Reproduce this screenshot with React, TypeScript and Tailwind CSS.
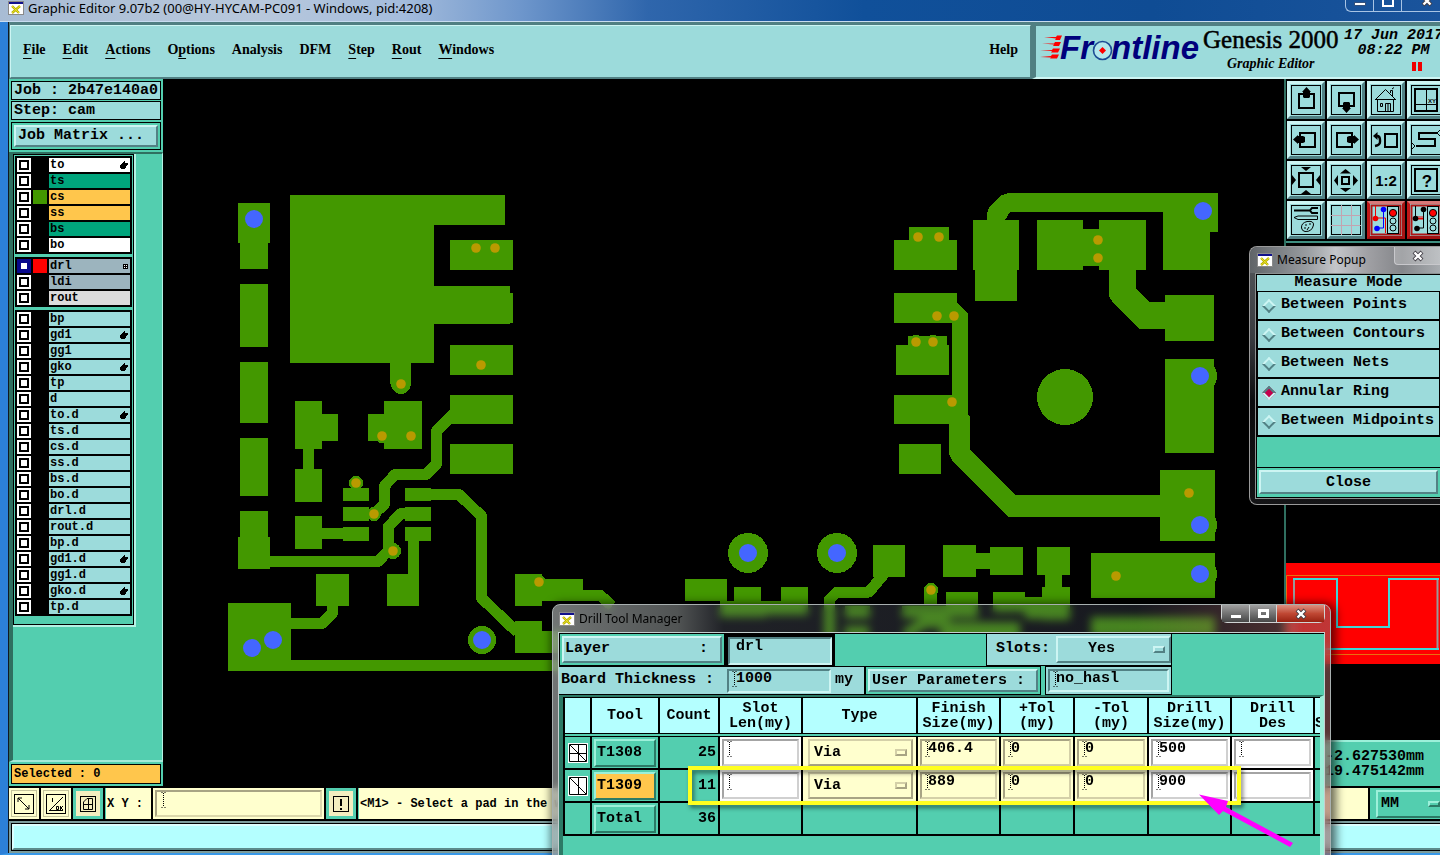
import type { ReactNode } from 'react';
import clsx from 'clsx';

type LayerTone = 'white' | 'green' | 'amber' | 'steel' | 'silver' | 'aqua';

interface Layer {
  name: string;
  tone: LayerTone;
  swatch?: string;
  mark?: 'hand' | 'grid';
  active?: boolean;
}

const toneClass: Record<LayerTone, string> = {
  white: 'bg-white',
  green: 'bg-[#00a47c]',
  amber: 'bg-[#ffc64c]',
  steel: 'bg-[#9cb4be]',
  silver: 'bg-[#dcdcdc]',
  aqua: 'bg-[#9cdbdb]',
};

const aqua = (name: string, mark?: 'hand'): Layer => ({ name, tone: 'aqua', mark });

const layerGroups: Layer[][] = [
  [
    { name: 'to', tone: 'white', mark: 'hand' },
    { name: 'ts', tone: 'green' },
    { name: 'cs', tone: 'amber', swatch: 'bg-[#439800]' },
    { name: 'ss', tone: 'amber' },
    { name: 'bs', tone: 'green' },
    { name: 'bo', tone: 'white' },
  ],
  [
    { name: 'drl', tone: 'steel', swatch: 'bg-[#ff0000]', mark: 'grid', active: true },
    { name: 'ldi', tone: 'steel' },
    { name: 'rout', tone: 'silver' },
  ],
  [
    aqua('bp'),
    aqua('gd1', 'hand'),
    aqua('gg1'),
    aqua('gko', 'hand'),
    aqua('tp'),
    aqua('d'),
    aqua('to.d', 'hand'),
    aqua('ts.d'),
    aqua('cs.d'),
    aqua('ss.d'),
    aqua('bs.d'),
    aqua('bo.d'),
    aqua('drl.d'),
    aqua('rout.d'),
    aqua('bp.d'),
    aqua('gd1.d', 'hand'),
    aqua('gg1.d'),
    aqua('gko.d', 'hand'),
    aqua('tp.d'),
  ],
];

// [label, index of the mnemonic letter]
const menuItems: [string, number][] = [
  ['File', 0],
  ['Edit', 0],
  ['Actions', 0],
  ['Options', 1],
  ['Analysis', -1],
  ['DFM', -1],
  ['Step', 0],
  ['Rout', 0],
  ['Windows', 0],
];

const measureModes = ['Between Points', 'Between Contours', 'Between Nets', 'Annular Ring', 'Between Midpoints'];

const mono = "font-['Liberation_Mono',monospace] font-bold";
const raised = 'border-t-[#cdf5f3] border-l-[#cdf5f3] border-b-[#528184] border-r-[#528184]';
const sunken = 'border-t-[#528184] border-l-[#528184] border-b-[#cdf5f3] border-r-[#cdf5f3]';
const raisedTeal = 'border-t-[#9cf0da] border-l-[#9cf0da] border-b-[#2c7a66] border-r-[#2c7a66]';

function WindowIcon() {
  return (
    <svg className="size-4 shrink-0" viewBox="0 0 16 16" aria-hidden="true">
      <rect x="0.5" y="1.5" width="15" height="13" fill="#fff" stroke="#8a8a8a" />
      <rect x="1" y="2" width="14" height="2" fill="#10108c" />
      <path d="M4 6l7 7M12 6l-8 7" stroke="#b8b000" strokeWidth="2.4" />
      <path d="M4 6l7 7M12 6l-8 7" stroke="#f4ec30" strokeWidth="0.8" />
    </svg>
  );
}

function CloseGlyph() {
  return (
    <svg className="size-3" viewBox="0 0 12 12" aria-hidden="true">
      <path d="M2 2L10 10M10 2L2 10" stroke="#403c44" strokeWidth="4" />
      <path d="M2.5 2.5L9.5 9.5M9.5 2.5L2.5 9.5" stroke="#fff" strokeWidth="2.4" />
    </svg>
  );
}

function HandMark() {
  return (
    <svg className="h-2 w-2 shrink-0" viewBox="0 0 8 8" aria-hidden="true">
      <path d="M4 0h1v2h3v2h-1v1h-1v2h-1v1h-4v-1h-1v-3h1v-1h1v-1h1v-1h1z" />
    </svg>
  );
}

function GridMark() {
  return (
    <svg className="h-[5px] w-[5px] shrink-0" viewBox="0 0 5 5" aria-hidden="true">
      <rect width="5" height="5" />
      <path d="M1 1h1v1h-1zM3 1h1v1h-1zM1 3h1v1h-1zM3 3h1v1h-1z" fill="#fff" />
    </svg>
  );
}

function Beam() {
  return (
    <svg className="h-4 w-[5px] shrink-0" viewBox="0 0 5 16" aria-hidden="true">
      <path d="M0.5 0.5h1M3.5 0.5h1M2.5 1v14M0.5 15.5h1M3.5 15.5h1" stroke="#000" strokeDasharray="1 1" />
    </svg>
  );
}

function LayerRow({ layer }: { layer: Layer }) {
  return (
    <label className="flex gap-[2px]">
      <input
        type="checkbox"
        defaultChecked={layer.active}
        className={clsx(
          'size-[14px] shrink-0 appearance-none border-2 bg-white',
          layer.active
            ? 'border-[#08088c] shadow-[inset_0_0_0_2px_#08088c]'
            : 'border-white shadow-[inset_0_0_0_2px_#000]',
        )}
      />
      <span className={clsx('size-[14px] shrink-0', layer.swatch)} />
      <span
        className={clsx(
          'flex h-[14px] flex-1 items-center justify-between pr-[2px] pl-px text-xs leading-[14px]',
          toneClass[layer.tone],
        )}
      >
        {layer.name}
        {layer.mark === 'hand' && <HandMark />}
        {layer.mark === 'grid' && <GridMark />}
      </span>
    </label>
  );
}

function Sidebar() {
  return (
    <aside className={clsx('flex w-[154px] shrink-0 flex-col bg-[#53ceaf]', mono)}>
      <div className="flex flex-col gap-px p-[2px]">
        <div className="border border-black bg-[#9cdbdb] pl-[2px] text-[15px] leading-[17px] whitespace-nowrap">
          Job : 2b47e140a0
        </div>
        <div className="border border-black bg-[#9cdbdb] pl-[2px] text-[15px] leading-[17px]">Step: cam</div>
        <div className="mt-px border border-black p-[2px]">
          <button
            className={clsx('block w-full border-2 bg-[#9cdbdb] pl-[2px] text-left text-[15px] leading-[18px]', raised)}
          >
            Job Matrix ...
          </button>
        </div>
      </div>
      <div className="flex flex-1 items-start border-t-2 border-r border-b-2 border-l-4 border-t-[#2f6f60] border-r-[#b4f2e4] border-b-[#a4ead8] border-l-[#2f6f60]">
        <div className="border-r-2 border-b-2 border-[#b4f2e4]">
          <div className="flex flex-col gap-[3px] border border-black bg-[#53ceaf] px-px pt-px pb-2">
            {layerGroups.map((group) => (
              <div key={group[0].name} className="flex w-[117px] flex-col gap-[2px] bg-black p-[2px]">
                {group.map((layer) => (
                  <LayerRow key={layer.name} layer={layer} />
                ))}
              </div>
            ))}
          </div>
        </div>
      </div>
      <div className="p-[2px]">
        <div className="border border-black bg-[#ffc64c] pl-[2px] text-xs leading-[18px]">Selected : 0</div>
      </div>
    </aside>
  );
}

// x, y, width, height
const pads: number[][] = [
  [238, 203, 32, 40], [240, 243, 28, 26], [240, 284, 28, 63], [240, 362, 28, 61], [240, 438, 28, 58],
  [240, 511, 28, 26], [238, 537, 32, 32], [290, 195, 215, 30], [290, 225, 144, 138], [434, 286, 76, 38],
  [510, 293, 3, 30], [390, 363, 21, 21], [450, 240, 63, 30], [450, 345, 63, 30], [450, 395, 63, 29],
  [450, 444, 63, 30], [295, 401, 27, 48], [322, 414, 16, 27], [303, 449, 11, 20], [295, 469, 27, 33],
  [295, 516, 27, 33], [322, 528, 21, 11], [343, 527, 26, 14], [343, 507, 26, 14], [343, 488, 26, 13],
  [384, 401, 38, 48], [368, 414, 16, 27], [405, 488, 26, 13], [405, 507, 26, 14], [405, 527, 26, 14],
  [408, 541, 11, 33], [387, 574, 32, 32], [316, 574, 33, 32], [228, 603, 63, 67], [228, 660, 340, 11],
  [515, 574, 27, 32], [542, 579, 41, 22], [515, 621, 27, 32], [542, 631, 22, 22],
  [909, 227, 40, 13], [894, 240, 63, 30], [973, 220, 46, 50], [975, 270, 42, 31], [1037, 220, 46, 50],
  [1083, 229, 16, 37], [1099, 220, 47, 50], [1165, 295, 49, 46], [1165, 359, 49, 94], [894, 293, 63, 30],
  [908, 336, 39, 9], [896, 345, 53, 30], [894, 395, 63, 29], [899, 444, 42, 30], [1160, 470, 55, 71],
  [1091, 553, 124, 45], [873, 545, 32, 32], [685, 579, 42, 22], [734, 587, 27, 17], [781, 587, 27, 17],
  [943, 545, 33, 32], [976, 553, 14, 16], [990, 547, 33, 28], [1037, 547, 33, 28], [1045, 575, 17, 12],
  [1042, 587, 28, 33], [1025, 597, 17, 22], [993, 592, 32, 20], [946, 592, 32, 20], [924, 590, 13, 14],
  [720, 601, 46, 16], [734, 601, 74, 14], [845, 606, 25, 12], [902, 606, 76, 12], [1091, 617, 124, 20],
  [940, 622, 80, 20], [845, 626, 24, 12],
];

// cx, cy, r
const rings: number[][] = [
  [254, 219, 16], [401, 384, 10], [382, 436, 7], [356, 483, 7], [374, 514, 7], [393, 551, 8], [539, 582, 7],
  [482, 640, 14], [1203, 211, 15], [1201, 376, 16], [1201, 525, 16], [1201, 574, 16], [1065, 397, 28],
  [916, 342, 7], [933, 342, 7], [937, 316, 7], [748, 553, 20], [837, 553, 20], [931, 590, 7],
];

const vias: number[][] = [
  [476, 248], [495, 248], [481, 365], [401, 384], [382, 436], [411, 436], [356, 483], [374, 514], [393, 551],
  [539, 582], [918, 237], [939, 237], [1098, 240], [1098, 258], [937, 316], [954, 316], [916, 342], [933, 342],
  [952, 402], [1189, 493], [1116, 576], [931, 590],
];

const drills: number[][] = [
  [254, 219], [252, 648], [273, 640], [482, 640], [1203, 211], [1200, 376], [1200, 525], [1200, 574], [748, 553],
  [837, 553],
];

function BoardCanvas() {
  return (
    <main className="relative min-w-0 flex-1 overflow-hidden bg-black">
      <svg className="block h-full w-full" role="img" aria-label="Board layout">
        <g transform="translate(-163 -79)">
          <g fill="#439800" shapeRendering="crispEdges">
            {pads.map(([x, y, w, h]) => (
              <rect key={`${x}-${y}`} x={x} y={y} width={w} height={h} />
            ))}
            {rings.map(([x, y, r]) => (
              <circle key={`${x}-${y}`} cx={x} cy={y} r={r} />
            ))}
            <path d="M987 220V213L990 206L1000 196L1008 193H1218V232H1210V270H1163V212H1010L1005 220Z" />
            <path d="M1109 270H1136V289L1150 302H1165V329H1140L1113 303L1109 296Z" />
            <path d="M957 302L968 314V414L970 417V450L1016 495H1160V517H1009L953 462L949 454V415H952V320H945Z" />
          </g>
          <g fill="none" stroke="#439800" strokeWidth="11" strokeLinejoin="round" shapeRendering="crispEdges">
            <path d="M268 561.5H378L388 551V527L401 513.5H410" />
            <path d="M374 514L384.5 504V486L395 474.5H426L436.5 464V431L456 411" />
            <path d="M430 494.5H459L481.5 516V598L517 632" />
            <path d="M332.5 604V613L322 623.5H290" />
            <path d="M580 595H600L612 606" />
            <path d="M884 574L869 592H837L829 600V640" />
            <path d="M905 635L925 622H950" />
          </g>
          <g fill="#b99a00">
            {vias.map(([x, y]) => (
              <circle key={`${x}-${y}`} cx={x} cy={y} r="4.8" />
            ))}
          </g>
          <g fill="#4466ff">
            {drills.map(([x, y]) => (
              <circle key={`${x}-${y}`} cx={x} cy={y} r="9" />
            ))}
          </g>
        </g>
      </svg>
    </main>
  );
}

function TrafficLight({ wires }: { wires: ReactNode }) {
  return (
    <>
      {wires}
      <rect x="20.5" y="5.5" width="11" height="27" fill="#9cdbdb" stroke="#000" />
      <circle cx="26" cy="12" r="3.6" fill="#f00" stroke="#000" />
      <circle cx="26" cy="20" r="3" fill="none" stroke="#000" />
      <circle cx="26" cy="27" r="3" fill="none" stroke="#000" />
    </>
  );
}

interface ToolDef {
  label: string;
  art: ReactNode;
  red?: boolean;
}

const toolDefs: ToolDef[] = [
  {
    label: 'Pan up',
    art: (
      <>
        <rect x="12" y="13" width="15" height="14" fill="none" stroke="#000" strokeWidth="2" />
        <path d="M19.5 6L24 11H23V16L22 17H17L16 16V11H15Z" />
      </>
    ),
  },
  {
    label: 'Pan down',
    art: (
      <>
        <rect x="12" y="12" width="15" height="13" fill="none" stroke="#000" strokeWidth="2" />
        <path d="M19.5 32L24 27H23V22L22 21H17L16 22V27H15Z" />
      </>
    ),
  },
  {
    label: 'Home',
    art: (
      <path
        d="M8.5 18.5L18.5 8.5L28.5 18.5M8 18.5H29M10.5 18.5V30.5H26.5V18.5M13.5 22.5H15.5V25.5H13.5ZM18.5 30V22.5H23.5V30M21 22.5V30M23.5 12V9.5H25.5V15M25 8L27 6.5"
        fill="none"
        stroke="#000"
      />
    ),
  },
  {
    label: 'Zoom to coordinates',
    art: (
      <>
        <rect x="8" y="8" width="22" height="22" fill="none" stroke="#000" strokeWidth="2" />
        <path d="M19.5 8V30M8 23.5H30" stroke="#000" fill="none" />
        <text x="21" y="22" fontSize="6" fontFamily="Liberation Sans" fontWeight="bold">XY</text>
      </>
    ),
  },
  {
    label: 'Pan left',
    art: (
      <>
        <rect x="13" y="12" width="15" height="14" fill="none" stroke="#000" strokeWidth="2" />
        <path d="M6 18.5L11 14V15H16L18 16V21L16 22H11V23Z" />
      </>
    ),
  },
  {
    label: 'Pan right',
    art: (
      <>
        <rect x="10" y="12" width="15" height="14" fill="none" stroke="#000" strokeWidth="2" />
        <path d="M32 18.5L27 14V15H22L20 16V21L22 22H27V23Z" />
      </>
    ),
  },
  {
    label: 'Previous view',
    art: (
      <>
        <rect x="18" y="13" width="12" height="13" fill="none" stroke="#000" strokeWidth="2" />
        <path d="M8 15H10Q13 15 13 19V21Q13 24 8 25" fill="none" stroke="#000" strokeWidth="2.4" />
        <path d="M6 15L10.5 11V19Z" />
      </>
    ),
  },
  {
    label: 'Serpentine view',
    art: (
      <>
        <path d="M30 12H12V18H28V25H9" fill="none" stroke="#000" strokeWidth="2" />
        <path d="M33 9L30 12L33 15M5 22L8 25L5 28" fill="none" stroke="#000" />
      </>
    ),
  },
  {
    label: 'Zoom in',
    art: (
      <>
        <rect x="12" y="12" width="14" height="14" fill="none" stroke="#000" strokeWidth="2" />
        <path d="M14 6H24L19 10ZM14 33H24L19 29ZM5 14V24L9 19ZM33 14V24L29 19Z" />
      </>
    ),
  },
  {
    label: 'Zoom out',
    art: (
      <>
        <rect x="15" y="16" width="7" height="7" fill="none" stroke="#000" strokeWidth="2" />
        <path d="M13 12.5H24L18.5 8ZM13 27H24L18.5 31ZM11 14V25L7 19.5ZM26 14V25L31 19.5Z" />
      </>
    ),
  },
  {
    label: 'Half scale',
    art: (
      <text x="19" y="25" fontSize="15" textAnchor="middle" fontFamily="Liberation Sans" fontWeight="bold">1:2</text>
    ),
  },
  {
    label: 'Help on view',
    art: (
      <>
        <rect x="8" y="8" width="22" height="22" fill="none" stroke="#000" strokeWidth="2" />
        <text x="20" y="26" fontSize="17" textAnchor="middle" fontFamily="Liberation Sans" fontWeight="bold">?</text>
      </>
    ),
  },
  {
    label: 'Tools',
    art: (
      <>
        <path d="M7 9.5H23M31 7H25L23 9.5L25 12H31" fill="none" stroke="#000" strokeWidth="2" />
        <path d="M7 16.5L11 15H30.5V18.5H11Z" fill="none" stroke="#000" />
        <path
          d="M14.5 27Q14 22 20 20.5Q27 19.5 26.5 24Q25 31 18 30.5Q15 30 14.5 27ZM18 24H20M22 23H24M17 27H19M22 26L20 29"
          fill="none"
          stroke="#000"
        />
      </>
    ),
  },
  {
    label: 'Grid',
    art: <path d="M14.5 4V34M24.5 4V34M4 14.5H34M4 24.5H34" stroke="#c4a4b0" fill="none" />,
  },
  {
    label: 'Online net check',
    red: true,
    art: (
      <TrafficLight
        wires={
          <>
            <path d="M8.5 5V17H18.5V32" fill="none" stroke="#e00" />
            <path d="M16.5 9V27H10" fill="none" stroke="#00f" />
            <circle cx="8.5" cy="17.5" r="2.8" fill="#e00" />
            <circle cx="16.5" cy="8.5" r="2.8" fill="#00f" />
            <circle cx="10" cy="27.5" r="2.8" fill="#00f" />
          </>
        }
      />
    ),
  },
  {
    label: 'Online spacing check',
    red: true,
    art: (
      <TrafficLight
        wires={
          <>
            <path d="M8.5 5V17M16.5 9V27H10" fill="none" stroke="#000" />
            <path d="M11 15V19M13 15V19M15 15V19M11 17.5H16" fill="none" stroke="#e00" />
            <circle cx="8.5" cy="17.5" r="2.8" />
            <circle cx="16.5" cy="8.5" r="2.8" />
            <circle cx="10" cy="27.5" r="2.8" />
          </>
        }
      />
    ),
  },
];

function Toolbox() {
  return (
    <div className="grid grid-cols-[repeat(4,38px)] gap-[2px] border-b-2 border-[#3f8f80] bg-black pt-[2px] pb-[2px] pl-px">
      {toolDefs.map((tool) => (
        <button
          key={tool.label}
          aria-label={tool.label}
          className={clsx(
            'size-[38px] border-[3px] bg-[#9cdbdb]',
            tool.red ? 'border-t-[#d87878] border-r-[#a81414] border-b-[#a01010] border-l-[#c01818]' : raised,
          )}
        >
          <svg className="block size-8" viewBox="3 3 32 32">
            <rect
              x="4.5"
              y="4.5"
              width="29"
              height="29"
              fill="none"
              stroke={tool.red ? '#b01414' : '#000'}
              strokeWidth={tool.red ? 2 : 1}
            />
            {tool.art}
          </svg>
        </button>
      ))}
    </div>
  );
}

function RightColumn() {
  return (
    <div className="flex w-[156px] shrink-0 flex-col overflow-hidden border-l-2 border-[#2f6f60] bg-black">
      <Toolbox />
      <div className="flex flex-1 flex-col justify-end">
        <svg className="mb-[76px] block h-[101px] w-full" viewBox="1286 563 154 101" role="img" aria-label="Overview">
          <rect x="1286" y="563" width="154" height="101" fill="#f00" />
          <path d="M1286.5 655V575.5H1440M1286 654.5H1440" fill="none" stroke="#e87010" />
          <path d="M1294 579V649M1437.5 579V649" stroke="#999" strokeWidth="2" />
          <path d="M1293 579H1337V627H1389V579H1439M1293 649H1439" fill="none" stroke="#3fd8d8" strokeWidth="2" />
        </svg>
      </div>
      <div
        className={clsx(
          'flex flex-col items-end border-t-2 border-[#9cf0da] bg-[#53ceaf] pt-[7px] pr-4 pb-[7px] text-[15px] leading-[15px]',
          mono,
        )}
      >
        <span>-2.627530mm</span>
        <span>19.475142mm</span>
      </div>
    </div>
  );
}

function FrontlineLogo() {
  return (
    <svg className="h-10 w-[162px] shrink-0" viewBox="1040 32 162 40" role="img" aria-label="Frontline">
      <g fill="#f00">
        <path d="M1045 39L1057 39L1058 37.5H1063L1061 42H1056L1057 40.5Z" />
        <path d="M1043 45.5L1055 45.5L1056 44H1062L1060 48H1054L1055 46.5Z" />
        <path d="M1041 52L1053 52L1054 50.5H1061L1059 54.5H1052L1053 53Z" />
        <path d="M1041 59L1052 58L1053 56.5H1060L1058 60.5H1051L1052 59.5Z" />
      </g>
      <g fill="#00007c" fontFamily="Liberation Sans, sans-serif" fontWeight="bold" fontStyle="italic" fontSize="33">
        <text x="1061" y="61">Fr</text>
        <text x="1112" y="61">ntline</text>
      </g>
      <circle cx="1103.5" cy="52.5" r="9" fill="#b4e8ec" stroke="#1c4c94" strokeWidth="1.6" />
      <path d="M1103.5 49L1107 52.5L1103.5 56L1100 52.5Z" fill="#f00" />
    </svg>
  );
}

function MenuLabel({ text, index }: { text: string; index: number }) {
  if (index < 0) return <>{text}</>;
  return (
    <>
      {text.slice(0, index)}
      <span className="underline decoration-1 underline-offset-4">{text[index]}</span>
      {text.slice(index + 1)}
    </>
  );
}

function Header() {
  return (
    <header className="flex h-[57px] shrink-0 border-t-2 border-[#507f82] bg-[#9cdbdb]">
      <nav
        className={clsx(
          "flex flex-1 items-center gap-[17px] border-2 px-3 pb-1 font-['Liberation_Serif',serif] text-sm leading-5 font-bold outline-1 -outline-offset-1 outline-[#507f82]",
          raised,
        )}
      >
        {menuItems.map(([text, index]) => (
          <button key={text}>
            <MenuLabel text={text} index={index} />
          </button>
        ))}
        <button className="ml-auto">Help</button>
      </nav>
      <div className="flex w-[408px] shrink-0 items-center overflow-hidden border-y-2 border-l-4 border-t-[#507f82] border-b-[#cdf5f3] border-l-[#507f82] pb-1 pl-[3px]">
        <FrontlineLogo />
        <div className="flex shrink-0 flex-col items-center px-[2px] font-['Liberation_Serif',serif]">
          <span className="text-[25px] leading-7 font-normal [-webkit-text-stroke:0.5px_black]">Genesis 2000</span>
          <span className="text-sm leading-5 font-bold italic">Graphic Editor</span>
        </div>
        <div className={clsx('flex w-[102px] shrink-0 flex-col items-center pl-1 text-[15px] leading-[15px] italic', mono)}>
          <span className="whitespace-nowrap">17 Jun 2017</span>
          <span>08:22 PM</span>
          <span className="mt-1 mr-[-48px] flex gap-[2px]">
            <i className="h-[9px] w-1 bg-[#f00000]" />
            <i className="h-[9px] w-1 bg-[#f00000]" />
          </span>
        </div>
      </div>
    </header>
  );
}

function TitleBar() {
  return (
    <div className="flex h-[22px] shrink-0 items-start overflow-hidden border-b border-[#c8dcf0] bg-[linear-gradient(90deg,#a8bcd4_0%,#b8c8dc_18%,#a4bcdc_28%,#6f97cc_36%,#2f66ac_45%,#10509a_60%,#0f4c94_80%,#1a549c_100%)]">
      <div className="flex items-center gap-1 pl-2 font-['Noto_Sans','Open_Sans',sans-serif] text-[13px] leading-[14px] text-black">
        <WindowIcon />
        <span className="whitespace-nowrap">Graphic Editor 9.07b2 (00@HY-HYCAM-PC091 - Windows, pid:4208)</span>
      </div>
      <div className="ml-auto flex h-3 w-[95px] shrink-0 rounded-bl-md border-b border-l border-[#a8c4e4]">
        <button aria-label="Minimize" className="flex w-7 items-start justify-center border-r border-[#a8c4e4]">
          <span className="mt-[2px] h-1 w-3 border border-[#33507c] bg-white" />
        </button>
        <button aria-label="Maximize" className="flex w-7 items-start justify-center border-r border-[#a8c4e4]">
          <span className="h-[7px] w-3 border-2 border-t-0 border-white" />
        </button>
        <button aria-label="Close" className="flex flex-1 items-end justify-center overflow-hidden pb-1 pl-3">
          <CloseGlyph />
        </button>
      </div>
    </div>
  );
}

function SquareTool({ label, teal, children }: { label: string; teal?: boolean; children: ReactNode }) {
  return (
    <button
      aria-label={label}
      className={clsx(
        'flex w-[30px] shrink-0 items-center justify-center border-3',
        teal ? 'border-[#53ceaf] bg-[#f4eec0]' : 'border-[#ffffce] bg-[#ffffce] outline-1 -outline-offset-3 outline-[#c4c49c]',
      )}
    >
      <svg className="size-5 shrink-0" viewBox="0 0 20 20" fill="none" stroke="#000">
        {children}
      </svg>
    </button>
  );
}

function StatusRow() {
  return (
    <div className={clsx('flex h-[35px] shrink-0 gap-[2px] border-y-2 border-black bg-black text-xs', mono)}>
      <SquareTool label="Snap line">
        <rect x="0.5" y="0.5" width="19" height="19" />
        <path d="M4 4L15 15M4 8V4H8M15 11V15H11" />
      </SquareTool>
      <SquareTool label="Line mode">
        <rect x="0.5" y="0.5" width="19" height="19" />
        <path d="M3 17L17 3M3 16.5H17M6.5 4V8M10.5 12.5h2v3h-2zM14.5 12v4M17 12l-2 2l2 2" />
      </SquareTool>
      <SquareTool label="Grid mode" teal>
        <rect x="2.5" y="2.5" width="15" height="15" />
        <path d="M5.5 8L9 4.5H14.5V15.5H5.5ZM10.5 4V16M5 10.5H15" />
      </SquareTool>
      <label className="flex shrink-0 items-stretch gap-[2px]">
        <span className="flex w-[46px] items-center border-l border-[#53ceaf] bg-[#ffffce] pl-px">X Y :</span>
        <span className="flex w-[171px] bg-[#ffffce] p-[2px]">
          <span className="flex flex-1 items-start border-2 border-[#a8a484] border-r-[#dcd8ac] border-b-[#dcd8ac] pl-1">
            <Beam />
            <input className="h-full w-full bg-transparent outline-none" />
          </span>
        </span>
      </label>
      <SquareTool label="Messages" teal>
        <rect x="2.5" y="2.5" width="15" height="15" />
        <path d="M10 5V12M10 14V16" strokeWidth="2" />
      </SquareTool>
      <div className="flex flex-1 items-center overflow-hidden border-l border-[#53ceaf] bg-[#ffffce] pl-px whitespace-nowrap">
        &lt;M1&gt; - Select a pad in the w
      </div>
      <div className="flex w-[70px] shrink-0 items-center justify-end bg-[#53ceaf] pl-[6px]">
        <div className={clsx('relative h-7 w-full border-y-2 border-l-2 bg-[#53ceaf]', raisedTeal)}>
          <select aria-label="Units" className="h-full w-full appearance-none bg-transparent pl-[3px] text-[15px] outline-none">
            <option>MM</option>
            <option>INCH</option>
          </select>
          <span
            className={clsx('pointer-events-none absolute top-[9px] right-0 h-[6px] w-3 border-2 bg-[#53ceaf]', raisedTeal)}
          />
        </div>
      </div>
    </div>
  );
}

function MeasurePopup() {
  return (
    <section className="absolute top-[246px] right-0 flex w-[191px] flex-col rounded-l-lg border border-r-0 border-[#9a9a9a] bg-[linear-gradient(180deg,#55585c_0%,#3a3c40_35%,#0c0c0e_60%,#141416_100%)] pb-[5px] pl-[5px]">
      <div className="-ml-[5px] flex h-[26px] items-center gap-1 overflow-hidden rounded-tl-lg bg-[linear-gradient(90deg,#606468_0%,#989ca0_30%,#c4c6ca_45%,#a0a0a4_62%,#84868a_80%,#a8acb0_100%)] pl-[7px] font-['Noto_Sans','Open_Sans',sans-serif] text-xs leading-4">
        <WindowIcon />
        <h2>Measure Popup</h2>
        <button
          aria-label="Close Measure Popup"
          className="ml-auto flex h-[18px] w-[46px] items-center justify-center self-start rounded-bl border-b border-l border-[#c8c8cc] bg-white/25"
        >
          <CloseGlyph />
        </button>
      </div>
      <fieldset className={clsx('border-y border-l border-[#8c9090] bg-black pl-px text-[15px]', mono)}>
        <div className="my-px bg-[#9cdbdb] text-center leading-4">Measure Mode</div>
        {measureModes.map((mode) => (
          <label
            key={mode}
            className="mx-px mb-[2px] flex h-[27px] items-center gap-[5px] bg-[#9cdbdb] pl-1 whitespace-nowrap"
          >
            <input
              type="radio"
              name="measure-mode"
              defaultChecked={mode === 'Annular Ring'}
              className="mx-[2px] size-[10px] shrink-0 rotate-45 appearance-none border-2 border-t-[#cdf5f3] border-r-[#528184] border-b-[#528184] border-l-[#cdf5f3] bg-[#9cdbdb] checked:border-t-[#528184] checked:border-r-[#cdf5f3] checked:border-b-[#cdf5f3] checked:border-l-[#528184] checked:bg-[#c4004c]"
            />
            {mode}
          </label>
        ))}
        <div className="h-[30px] bg-[#53ceaf]" />
        <div className="my-px border-2 border-[#53ceaf] bg-[#53ceaf]">
          <button className={clsx('h-6 w-full border-2 bg-[#9cdbdb]', raised)}>Close</button>
        </div>
      </fieldset>
    </section>
  );
}

const inputTone: Record<string, string> = {
  white: 'bg-white border-t-[#a4a4a4] border-l-[#a4a4a4] border-b-[#d0d0d0] border-r-[#d0d0d0]',
  cream: 'bg-[#ffffce] border-t-[#a8a484] border-l-[#a8a484] border-b-[#d4d0a8] border-r-[#d4d0a8]',
};

function CellInput({ label, value, tone, bare }: { label: string; value: string; tone: 'white' | 'cream'; bare?: boolean }) {
  return (
    <div className={clsx('p-[2px]', tone === 'white' ? 'bg-white' : 'bg-[#ffffce]')}>
      <div className={clsx('flex h-[27px] items-start border-2 pl-[3px]', inputTone[tone])}>
        {!bare && <Beam />}
        <input
          aria-label={label}
          defaultValue={value}
          className="-ml-[2px] h-4 w-full min-w-0 bg-transparent leading-4 outline-none"
        />
      </div>
    </div>
  );
}

function TypeCell({ label }: { label: string }) {
  return (
    <div className="bg-[#ffffce] py-[2px] pr-[3px] pl-[5px]">
      <div className="relative h-[27px] border-2 border-t-[#d4d0a8] border-r-[#a8a484] border-b-[#a8a484] border-l-[#d4d0a8]">
        <select aria-label={label} className="h-full w-full appearance-none bg-transparent pl-1 outline-none" defaultValue="Via">
          <option>Via</option>
          <option>Plated</option>
        </select>
        <span className="pointer-events-none absolute top-2 right-1 h-[7px] w-3 border-2 border-t-[#d4d0a8] border-r-[#a8a484] border-b-[#a8a484] border-l-[#d4d0a8]" />
      </div>
    </div>
  );
}

interface ToolRow {
  tool: string;
  count: number;
  finish: string;
  size: string;
  selected?: boolean;
}

const toolRows: ToolRow[] = [
  { tool: 'T1308', count: 25, finish: '406.4', size: '500' },
  { tool: 'T1309', count: 11, finish: '889', size: '900', selected: true },
];

const columns = [
  { width: 'w-[27px]', lines: [''] },
  { width: 'w-[68px]', lines: ['Tool'] },
  { width: 'w-[60px]', lines: ['Count'] },
  { width: 'w-[83px]', lines: ['Slot', 'Len(my)'] },
  { width: 'w-[115px]', lines: ['Type'] },
  { width: 'w-[83px]', lines: ['Finish', 'Size(my)'] },
  { width: 'w-[74px]', lines: ['+Tol', '(my)'] },
  { width: 'w-[74px]', lines: ['-Tol', '(my)'] },
  { width: 'w-[83px]', lines: ['Drill', 'Size(my)'] },
  { width: 'w-[83px]', lines: ['Drill', 'Des'] },
];

const cell = 'h-[33px] border-r-2 border-b-2 border-black p-0';

function ToolButton({ text, selected }: { text: string; selected?: boolean }) {
  return (
    <div className="px-[2px] py-px">
      <button
        className={clsx('block h-7 w-full border-2 pl-px text-left', selected ? 'bg-[#ffc64c]' : 'bg-[#53ceaf]', raisedTeal)}
      >
        {text}
      </button>
    </div>
  );
}

function ToolTable() {
  return (
    <table className="w-full table-fixed border-separate border-spacing-0 border-l-2 border-black text-[15px] leading-4">
      <thead>
        <tr>
          {columns.map((column) => (
            <th
              key={column.lines.join(' ')}
              className={clsx(
                'h-[37px] border-y border-r-2 border-black bg-[#b4ffff] p-0 leading-[15px] font-bold whitespace-nowrap',
                column.width,
              )}
            >
              {column.lines.map((line) => (
                <div key={line}>{line}</div>
              ))}
            </th>
          ))}
          <th className="overflow-hidden border-y border-black bg-[#b4ffff] p-0 text-left leading-[15px] font-bold">
            <div>&nbsp;</div>
            <div>S</div>
          </th>
        </tr>
        <tr aria-hidden="true">
          <td colSpan={11} className="h-[3px] border-b border-black p-0" />
        </tr>
      </thead>
      <tbody>
        {toolRows.map((row) => (
          <tr key={row.tool}>
            <td className={cell}>
              <svg className="mx-auto block size-5" viewBox="0 0 20 20">
                <rect width="20" height="20" fill="#fff" />
                <path d="M1.5 1.5H18.5V18.5H1.5ZM2 2L18 18M10.5 2V18" fill="none" stroke="#000" />
                {!row.selected && <path d="M2 10.5H18" stroke="#000" />}
              </svg>
            </td>
            <td className={cell}>
              <ToolButton text={row.tool} selected={row.selected} />
            </td>
            <td className={clsx(cell, 'pr-[2px] text-right')}>{row.count}</td>
            <td className={cell}>
              <CellInput label={`${row.tool} slot length`} value="" tone="white" />
            </td>
            <td className={cell}>
              <TypeCell label={`${row.tool} type`} />
            </td>
            <td className={cell}>
              <CellInput label={`${row.tool} finish size`} value={row.finish} tone="cream" />
            </td>
            <td className={cell}>
              <CellInput label={`${row.tool} plus tolerance`} value="0" tone="cream" />
            </td>
            <td className={cell}>
              <CellInput label={`${row.tool} minus tolerance`} value="0" tone="cream" />
            </td>
            <td className={cell}>
              <CellInput label={`${row.tool} drill size`} value={row.size} tone="white" />
            </td>
            <td className={cell}>
              <CellInput label={`${row.tool} drill designator`} value="" tone="white" bare={row.selected} />
            </td>
            <td className="border-b-2 border-black p-0" />
          </tr>
        ))}
        <tr>
          <td className={cell} />
          <td className={cell}>
            <ToolButton text="Total" />
          </td>
          <td className={clsx(cell, 'pr-[2px] text-right')}>36</td>
          {columns.slice(3).map((column) => (
            <td key={column.lines.join(' ')} className={cell} />
          ))}
          <td className="border-b-2 border-black p-0" />
        </tr>
      </tbody>
    </table>
  );
}

function Annotation() {
  return (
    <svg
      className="pointer-events-none absolute top-[156px] left-[130px] h-[94px] w-[620px] overflow-visible"
      viewBox="683 761 620 94"
      aria-hidden="true"
    >
      <g className="drop-shadow-[2px_3px_2px_rgba(0,0,0,0.5)]">
        <rect x="690" y="768" width="549" height="35" fill="none" stroke="#ffff20" strokeWidth="4" />
      </g>
      <path d="M1199 794.5L1228 801L1226 807L1293 843L1290 847L1223 811L1219 815Z" fill="#ff00ff" />
    </svg>
  );
}

function DrillToolManager() {
  return (
    <section className="absolute top-[604px] left-[552px] flex h-[270px] w-[779px] flex-col rounded-t-lg border border-[#a8b0b0] bg-[linear-gradient(90deg,rgba(150,155,155,.75)_0%,rgba(135,140,140,.6)_16%,rgba(90,95,110,.35)_22%,rgba(80,85,105,.3)_75%,rgba(150,90,90,.6)_100%)] px-[5px] shadow-[2px_2px_10px_3px_rgba(0,0,0,0.6)] backdrop-blur-xs">
      <div className="flex h-[27px] shrink-0 items-center gap-1 pl-px font-['Noto_Sans','Open_Sans',sans-serif] text-xs leading-4 text-black">
        <WindowIcon />
        <h2>Drill Tool Manager</h2>
        <div className="ml-auto flex h-[18px] self-start rounded-b-md border border-t-0 border-[#d0d4d4]">
          <button
            aria-label="Minimize Drill Tool Manager"
            className="flex w-7 items-end justify-center border-r border-[#d0d4d4] bg-linear-to-b from-[#a0a0a0] to-[#484848] pb-1"
          >
            <span className="h-[3px] w-[10px] bg-white" />
          </button>
          <button
            aria-label="Maximize Drill Tool Manager"
            className="flex w-[27px] items-center justify-center border-r border-[#d0d4d4] bg-linear-to-b from-[#a0a0a0] to-[#484848]"
          >
            <span className="h-[9px] w-[11px] border-3 border-white" />
          </button>
          <button
            aria-label="Close Drill Tool Manager"
            className="flex w-[47px] items-center justify-center bg-linear-to-b from-[#dc9080] via-[#c04834] to-[#982010]"
          >
            <CloseGlyph />
          </button>
        </div>
      </div>
      <div className={clsx('flex flex-1 flex-col overflow-hidden border border-b-0 border-[#c4d0d0] bg-[#53ceaf] text-[15px]', mono)}>
        <div className="flex h-[33px] shrink-0 border-t border-black">
          <div className="w-[166px] border border-t-0 border-black p-[2px]">
            <button className={clsx('flex h-full w-full items-center justify-between border-2 bg-[#9cdbdb] pr-3 pl-px', raised)}>
              <span>Layer</span>
              <span>:</span>
            </button>
          </div>
          <div className="w-[110px] bg-black px-[3px] py-[2px]">
            <input
              aria-label="Layer"
              defaultValue="drl"
              className={clsx('h-full w-full border-2 bg-[#9cdbdb] pb-2 pl-[6px] outline-none', sunken)}
            />
          </div>
          <label className="mr-38 ml-auto flex w-[186px] items-center border border-t-0 border-black bg-[#9cdbdb] pl-[9px]">
            <span className="flex-1">Slots:</span>
            <span className="relative h-full w-[115px] py-[2px]">
              <select className={clsx('h-full w-full appearance-none border-2 pl-[30px] outline-none', raised)}>
                <option>Yes</option>
                <option>No</option>
              </select>
              <span className={clsx('pointer-events-none absolute top-3 right-[6px] h-[7px] w-3 border-2', raised)} />
            </span>
          </label>
        </div>
        <div className="flex h-[29px] shrink-0">
          <label className="flex w-[307px] items-center border-y border-r-2 border-black bg-[#9cdbdb] pl-[2px]">
            <span className="w-[166px]">Board Thickness :</span>
            <span className={clsx('flex h-6 w-[104px] items-start border-2 pl-[3px]', sunken)}>
              <Beam />
              <input defaultValue="1000" className="-ml-px h-4 w-full min-w-0 bg-transparent leading-4 outline-none" />
            </span>
            <span className="pl-1">my</span>
          </label>
          <div className="w-[175px] border border-l-0 border-black p-[2px]">
            <button className={clsx('block h-full w-full border-2 bg-[#9cdbdb] pl-[2px] text-left leading-5', raised)}>
              User Parameters :
            </button>
          </div>
          <div className="mr-38 ml-auto flex w-[127px] border border-black bg-[#9cdbdb] p-[2px]">
            <span className={clsx('flex w-full items-start border-2 pl-[3px]', sunken)}>
              <Beam />
              <input
                aria-label="User parameters"
                defaultValue="no_hasl"
                className="-ml-[2px] h-4 w-full min-w-0 bg-transparent leading-4 outline-none"
              />
            </span>
          </div>
        </div>
        <div className="flex-1 border-t-2 border-r-4 border-l-4 border-t-[#2c7a66] border-r-[#9cf0da] border-l-[#2c7a66]">
          <ToolTable />
        </div>
      </div>
      <Annotation />
    </section>
  );
}

export default function App() {
  return (
    <div className="relative flex h-screen flex-col overflow-hidden bg-black text-black">
      <TitleBar />
      <div className="flex min-h-0 flex-1 flex-col border-b-2 border-l-8 border-b-[#3898e8] border-l-[#2c80d8]">
        <div className="flex min-h-0 flex-1 flex-col border-l border-[#101820]">
          <Header />
          <div className="flex min-h-0 flex-1">
            <Sidebar />
            <BoardCanvas />
            <RightColumn />
          </div>
          <StatusRow />
          <footer className="h-8 shrink-0 border-2 border-r-0 border-[#7c9c9c] bg-black py-px pl-px">
            <div className="h-full border-t-2 border-b-2 border-l-2 border-t-[#dcffff] border-b-[#5c8c8c] border-l-[#dcffff] bg-[#b4ffff]" />
          </footer>
        </div>
      </div>
      <MeasurePopup />
      <DrillToolManager />
    </div>
  );
}
